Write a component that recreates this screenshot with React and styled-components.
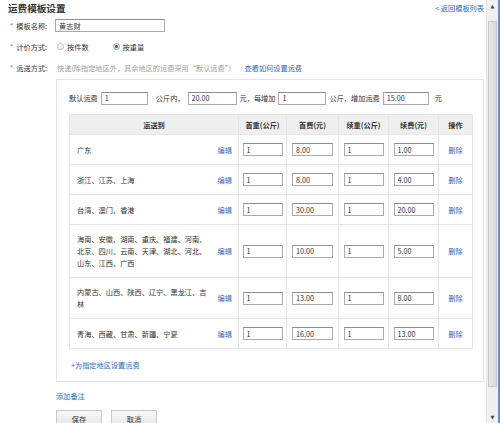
import React from 'react';
import styled, { createGlobalStyle } from 'styled-components';

const GlobalStyle = createGlobalStyle`
  html, body {
    margin: 0;
    padding: 0;
    background: #fff;
  }
  body {
    font-family: "Noto Sans CJK SC", "Liberation Sans", sans-serif;
    font-size: 7.2px;
    line-height: 12px;
    color: #333;
  }
`;

const Window = styled.div`
  display: flex;
  width: 500px;
  height: 423px;
  overflow: hidden;
`;

const Page = styled.div`
  flex: 1;
  min-width: 0;
  padding: 0 2px 0 8px;
`;

const TitleBar = styled.div`
  display: flex;
  justify-content: space-between;
  align-items: center;
  height: 15px;
`;

const Title = styled.h2`
  margin: 0;
  font-size: 9.6px;
  font-weight: bold;
  color: #333;
`;

const Link = styled.a`
  color: #2f6cc2;
  text-decoration: none;
  cursor: pointer;
  white-space: nowrap;
`;

const FormRow = styled.div`
  display: flex;
  align-items: center;
  height: 21px;
`;

const Label = styled.div`
  width: 47px;
  flex-shrink: 0;
  padding-left: 2px;
  box-sizing: border-box;
  white-space: nowrap;
`;

const Star = styled.span`
  color: #e4393c;
  margin-right: 3px;
`;

const TextInput = styled.input`
  width: ${(p) => p.$w || 41}px;
  height: 13px;
  box-sizing: border-box;
  margin: 0;
  padding: 0 3px;
  border: 1px solid #ababab;
  border-top-color: #8e8e8e;
  background: #fff;
  font-family: inherit;
  font-size: 7.2px;
  color: #333;
  outline: none;
`;

const RadioGroup = styled.div`
  display: flex;
  align-items: center;
  gap: 24px;
  margin-left: 2px;
`;

const RadioOption = styled.label`
  display: flex;
  align-items: center;
  gap: 3px;
`;

const RadioDot = styled.span`
  width: 5px;
  height: 5px;
  border-radius: 50%;
  border: 1px solid ${(p) => (p.$checked ? '#8a9bb0' : '#bdbdbd')};
  background: ${(p) =>
    p.$checked
      ? 'radial-gradient(circle, #3d5a80 0 1.3px, #fff 1.6px)'
      : 'linear-gradient(#fff, #ececec)'};
`;

const Hint = styled.span`
  color: #a0a0a0;
  margin-left: 2px;
  margin-right: 9px;
  white-space: nowrap;
`;

const Panel = styled.div`
  margin: 1px 0 0 48px;
  border: 1px solid #e6e6e6;
  padding: 11px 15px 10px 12px;
`;

const FeeRow = styled.div`
  display: flex;
  align-items: center;
  height: 14px;
  white-space: nowrap;

  input {
    margin: 0 3px;
  }
`;

const FeeText = styled.span`
  margin-left: ${(p) => p.$gap || 0}px;
`;

const Table = styled.table`
  width: 397px;
  margin-top: 9px;
  border-collapse: collapse;
  table-layout: fixed;
`;

const HeadCell = styled.th`
  width: ${(p) => p.$w}px;
  height: 19px;
  padding: 0;
  background: #efefef;
  border: 1px solid #e6e6e6;
  font-weight: bold;
  text-align: center;
  color: #333;
`;

const Cell = styled.td`
  padding: 8px 0;
  border: 1px solid #e6e6e6;
  text-align: center;
  vertical-align: middle;

  & > input {
    display: block;
    margin: 0 auto;
  }
`;

const RegionCell = styled.div`
  display: flex;
  align-items: center;
  justify-content: space-between;
  padding: 0 6px 0 7px;
  text-align: left;
`;

const RegionText = styled.span`
  width: 132px;
`;

const AddArea = styled(Link)`
  display: block;
  margin: 10px 0 0 2px;
`;

const Remark = styled(Link)`
  display: block;
  margin: 8px 0 0 48px;
`;

const Actions = styled.div`
  display: flex;
  gap: 9px;
  margin: 8px 0 0 48px;
`;

const Button = styled.button`
  width: 46px;
  height: 18px;
  padding: 0;
  border: 1px solid #c9c9c9;
  background: linear-gradient(#f8f8f8, #e6e6e6);
  font-family: inherit;
  font-size: 7.2px;
  color: #333;
`;

const Scrollbar = styled.div`
  width: 14px;
  flex-shrink: 0;
  display: flex;
  flex-direction: column;
  box-sizing: border-box;
  background: #f0f0f0;
  border-left: 1px solid #e6e6e6;
  border-right: 2px solid #5b8fd6;
`;

const ScrollArrow = styled.div`
  height: 12px;
  display: flex;
  align-items: center;
  justify-content: center;
  font-family: "DejaVu Sans", sans-serif;
  font-size: 5px;
  color: #444;
`;

const ScrollTrack = styled.div`
  flex: 1;
  padding: 9px 1px 0;
`;

const ScrollThumb = styled.div`
  height: 364px;
  border: 1px solid #c6c6c6;
  background: linear-gradient(to right, #e9e9e9, #d9d9d9);
`;

const columns = [
  { title: '运送到', w: 168 },
  { title: '首重(公斤)', w: 47 },
  { title: '首费(元)', w: 51 },
  { title: '续重(公斤)', w: 49 },
  { title: '续费(元)', w: 49 },
  { title: '操作', w: 33 },
];

const rules = [
  { area: '广东', first: '1', firstFee: '8.00', next: '1', nextFee: '1.00' },
  { area: '浙江、江苏、上海', first: '1', firstFee: '8.00', next: '1', nextFee: '4.00' },
  { area: '台湾、澳门、香港', first: '1', firstFee: '30.00', next: '1', nextFee: '20.00' },
  {
    area: '海南、安徽、湖南、重庆、福建、河南、北京、四川、云南、天津、湖北、河北、山东、江西、广西',
    first: '1',
    firstFee: '10.00',
    next: '1',
    nextFee: '5.00',
  },
  { area: '内蒙古、山西、陕西、辽宁、黑龙江、吉林', first: '1', firstFee: '13.00', next: '1', nextFee: '8.00' },
  { area: '青海、西藏、甘肃、新疆、宁夏', first: '1', firstFee: '16.00', next: '1', nextFee: '13.00' },
];

const App = () => {
  return (
    <>
      <GlobalStyle />
      <Window>
        <Page>
          <TitleBar>
            <Title>运费模板设置</Title>
            <Link>&lt; 返回模板列表</Link>
          </TitleBar>

          <FormRow>
            <Label><Star>*</Star>模板名称:</Label>
            <TextInput $w={110} defaultValue="黄志财" />
          </FormRow>

          <FormRow>
            <Label><Star>*</Star>计价方式:</Label>
            <RadioGroup>
              <RadioOption><RadioDot />按件数</RadioOption>
              <RadioOption><RadioDot $checked />按重量</RadioOption>
            </RadioGroup>
          </FormRow>

          <FormRow>
            <Label><Star>*</Star>运送方式:</Label>
            <Hint>快递(除指定地区外，其余地区的运费采用“默认运费”）</Hint>
            <Link>查看如何设置运费</Link>
          </FormRow>

          <Panel>
            <FeeRow>
              <FeeText>默认运费</FeeText>
              <TextInput $w={47} defaultValue="1" />
              <FeeText $gap={5}>公斤内，</FeeText>
              <TextInput $w={49} defaultValue="20.00" />
              <FeeText>元，每增加</FeeText>
              <TextInput $w={48} defaultValue="1" />
              <FeeText>公斤，增加运费</FeeText>
              <TextInput $w={46} defaultValue="15.00" />
              <FeeText $gap={3}>元</FeeText>
            </FeeRow>

            <Table>
              <thead>
                <tr>
                  {columns.map((c) => (
                    <HeadCell key={c.title} $w={c.w}>{c.title}</HeadCell>
                  ))}
                </tr>
              </thead>
              <tbody>
                {rules.map((r) => (
                  <tr key={r.area}>
                    <Cell>
                      <RegionCell>
                        <RegionText>{r.area}</RegionText>
                        <Link>编辑</Link>
                      </RegionCell>
                    </Cell>
                    <Cell><TextInput $w={40} defaultValue={r.first} /></Cell>
                    <Cell><TextInput $w={41} defaultValue={r.firstFee} /></Cell>
                    <Cell><TextInput $w={40} defaultValue={r.next} /></Cell>
                    <Cell><TextInput $w={40} defaultValue={r.nextFee} /></Cell>
                    <Cell><Link>删除</Link></Cell>
                  </tr>
                ))}
              </tbody>
            </Table>

            <AddArea>+为指定地区设置运费</AddArea>
          </Panel>

          <Remark>添加备注</Remark>
          <Actions>
            <Button>保存</Button>
            <Button>取消</Button>
          </Actions>
        </Page>

        <Scrollbar>
          <ScrollArrow>▲</ScrollArrow>
          <ScrollTrack>
            <ScrollThumb />
          </ScrollTrack>
          <ScrollArrow>▼</ScrollArrow>
        </Scrollbar>
      </Window>
    </>
  );
};

export default App;
